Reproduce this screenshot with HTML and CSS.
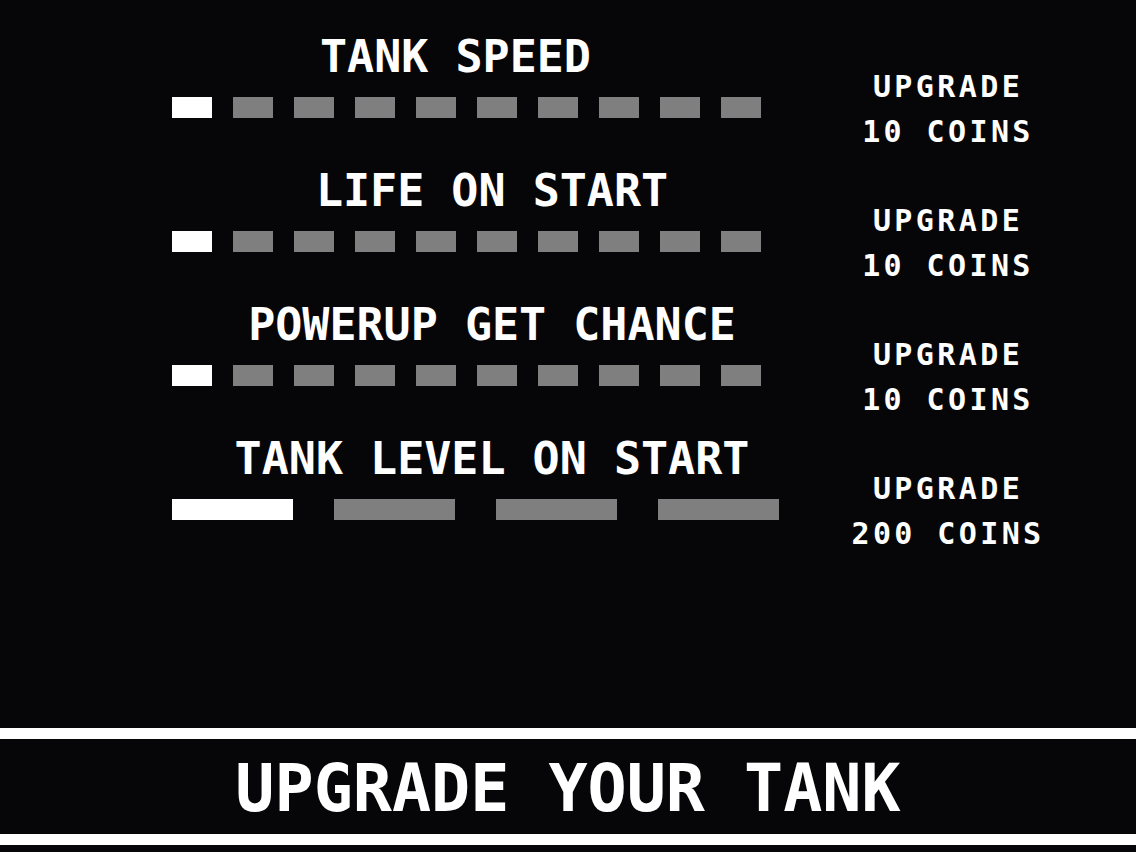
FILE: index.html
```html
<!DOCTYPE html>
<html lang="en">
<head>
    <meta charset="UTF-8">
    <meta name="viewport" content="width=device-width, initial-scale=1.0">
    <title>Upgrade Your Tank</title>
    <link rel="stylesheet" href="styles.css">
</head>
<body>

    <div class="shop">
        <div class="row">
            <div class="stat">
                <h2 class="stat-name speed">TANK SPEED</h2>
                <div class="meter">
                    <span class="seg on"></span>
                    <span class="seg"></span>
                    <span class="seg"></span>
                    <span class="seg"></span>
                    <span class="seg"></span>
                    <span class="seg"></span>
                    <span class="seg"></span>
                    <span class="seg"></span>
                    <span class="seg"></span>
                    <span class="seg"></span>
                </div>
            </div>
            <div class="price">
                <p>UPGRADE</p>
                <p>10 COINS</p>
            </div>
        </div>

        <div class="row">
            <div class="stat">
                <h2 class="stat-name">LIFE ON START</h2>
                <div class="meter">
                    <span class="seg on"></span>
                    <span class="seg"></span>
                    <span class="seg"></span>
                    <span class="seg"></span>
                    <span class="seg"></span>
                    <span class="seg"></span>
                    <span class="seg"></span>
                    <span class="seg"></span>
                    <span class="seg"></span>
                    <span class="seg"></span>
                </div>
            </div>
            <div class="price">
                <p>UPGRADE</p>
                <p>10 COINS</p>
            </div>
        </div>

        <div class="row">
            <div class="stat">
                <h2 class="stat-name">POWERUP GET CHANCE</h2>
                <div class="meter">
                    <span class="seg on"></span>
                    <span class="seg"></span>
                    <span class="seg"></span>
                    <span class="seg"></span>
                    <span class="seg"></span>
                    <span class="seg"></span>
                    <span class="seg"></span>
                    <span class="seg"></span>
                    <span class="seg"></span>
                    <span class="seg"></span>
                </div>
            </div>
            <div class="price">
                <p>UPGRADE</p>
                <p>10 COINS</p>
            </div>
        </div>

        <div class="row">
            <div class="stat">
                <h2 class="stat-name">TANK LEVEL ON START</h2>
                <div class="meter wide">
                    <span class="seg on"></span>
                    <span class="seg"></span>
                    <span class="seg"></span>
                    <span class="seg"></span>
                </div>
            </div>
            <div class="price">
                <p>UPGRADE</p>
                <p>200 COINS</p>
            </div>
        </div>
    </div>

    <footer class="banner">
        <h1>UPGRADE YOUR TANK</h1>
    </footer>

</body>
</html>
```

FILE: styles.css
```css
* {
    padding: 0;
    margin: 0;
    box-sizing: border-box;
}

body {
    background-color: #060608;
    color: #fff;
    font-family: 'DejaVu Sans Mono', 'Liberation Mono', monospace;
    font-weight: bold;
    height: 100vh;
    display: flex;
    flex-direction: column;
    overflow: hidden;
}

.shop {
    padding: 34px 0 0 172px;
}

.row {
    display: flex;
    height: 134px;
}

.stat {
    width: 640px;
}

.stat-name {
    font-size: 45px;
    line-height: 45px;
    font-weight: bold;
    text-align: center;
    margin-bottom: 18px;
}

/* first title sits a bit left of the others */
.stat-name.speed {
    padding-right: 73px;
}

.meter {
    display: flex;
    gap: 21px;
}

.seg {
    display: block;
    width: 40px;
    height: 21px;
    background-color: #7f7f7f;
}

.seg.on {
    background-color: #fff;
}

.meter.wide {
    gap: 41px;
}

.meter.wide .seg {
    width: 121px;
}

.price {
    width: 200px;
    margin-left: 36px;
    padding-top: 30px;
    text-align: center;
    font-size: 30px;
    line-height: 45px;
    letter-spacing: 3.4px;
}

.banner {
    margin-top: auto;
    margin-bottom: 7px;
    border-top: 11px solid #fff;
    border-bottom: 11px solid #fff;
    height: 117px;
    padding-top: 4px;
    text-align: center;
}

.banner h1 {
    font-size: 65px;
    line-height: 91px;
    font-weight: bold;
}
```
